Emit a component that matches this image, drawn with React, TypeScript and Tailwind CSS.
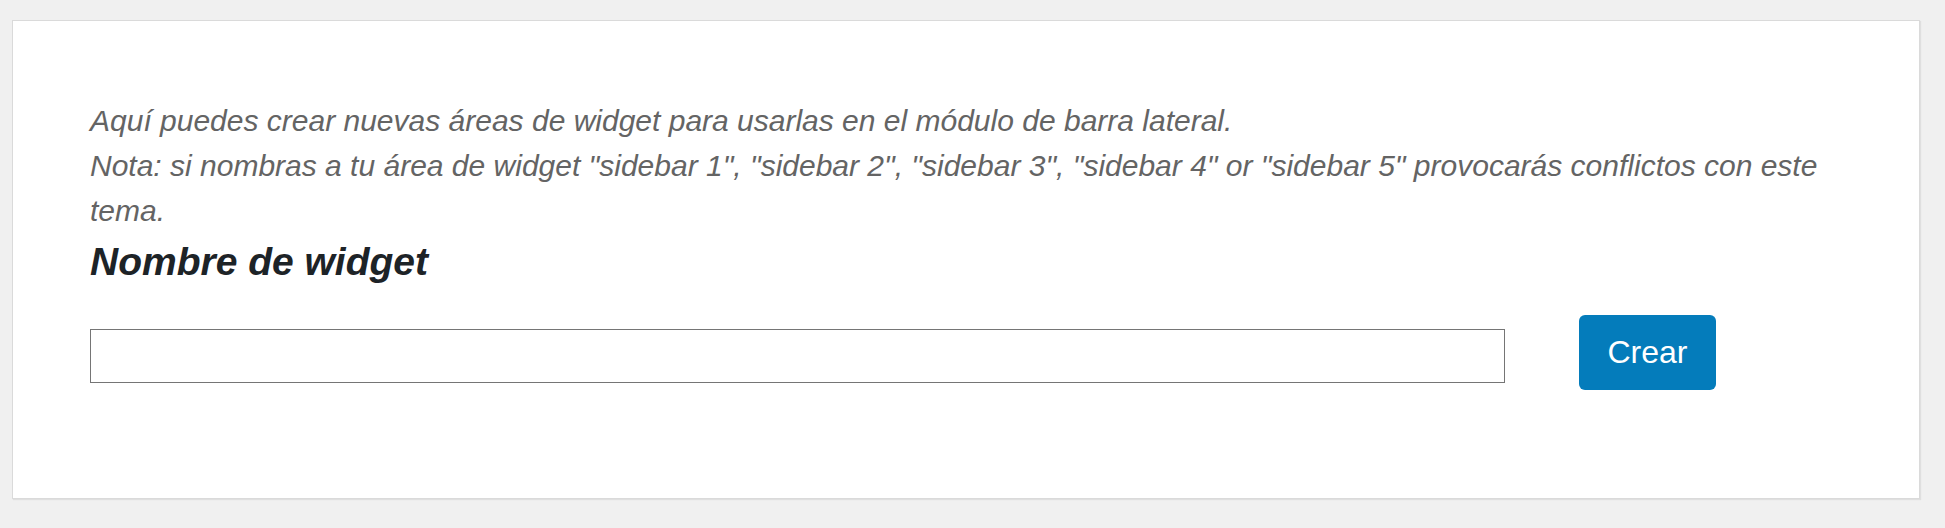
import { useState } from 'react';

export default function App() {
    const [name, setName] = useState('');

    return (
        <div className="min-h-screen bg-[#f0f0f0] pt-[20px] pl-[12px] pr-[25px] font-['Liberation_Sans',Arial,sans-serif]">
            <div className="bg-white border border-[#dadada] shadow-[1px_1px_1px_rgba(0,0,0,0.07)] h-[479px] px-[77px] pt-[77px]">
                {/* Intro */}
                <p className="text-[30px] leading-[45px] italic text-[#646464]">
                    Aquí puedes crear nuevas áreas de widget para usarlas en el módulo de barra lateral.
                    <br />
                    Nota: si nombras a tu área de widget "sidebar 1", "sidebar 2", "sidebar 3", "sidebar 4" or "sidebar 5" provocarás conflictos con este tema.
                </p>
                <h3 className="text-[39px] leading-[1.5] font-bold italic text-[#1d2327]">Nombre de widget</h3>

                {/* Form */}
                <div className="flex items-start mt-[23px]">
                    <input
                        type="text"
                        value={name}
                        onChange={(e) => setName(e.target.value)}
                        className="mt-[14px] w-[1415px] h-[54px] border border-[#757575] bg-white px-2 text-[20px] outline-none"
                    />
                    <button className="ml-[74px] w-[137px] h-[75px] rounded-[6px] bg-[#047cbb] text-white text-[32px]">
                        Crear
                    </button>
                </div>
            </div>
        </div>
    );
}
